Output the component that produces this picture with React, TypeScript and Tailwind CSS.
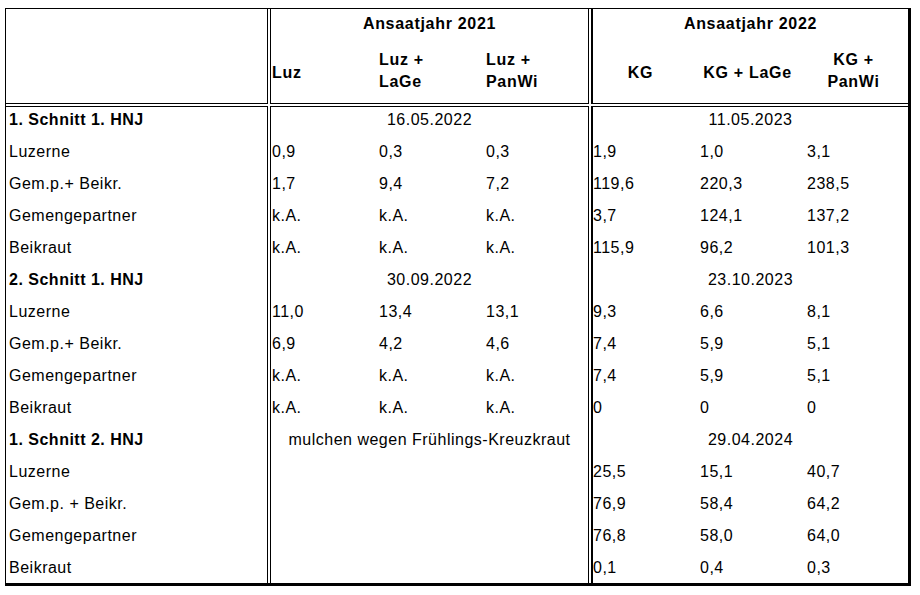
type Cells = string[] | { span: string } | null;

interface Row {
  label: string;
  bold?: boolean;
  y21: Cells;
  y22: Cells;
}

const rows: Row[] = [
  { label: '1. Schnitt 1. HNJ', bold: true, y21: { span: '16.05.2022' }, y22: { span: '11.05.2023' } },
  { label: 'Luzerne', y21: ['0,9', '0,3', '0,3'], y22: ['1,9', '1,0', '3,1'] },
  { label: 'Gem.p.+ Beikr.', y21: ['1,7', '9,4', '7,2'], y22: ['119,6', '220,3', '238,5'] },
  { label: 'Gemengepartner', y21: ['k.A.', 'k.A.', 'k.A.'], y22: ['3,7', '124,1', '137,2'] },
  { label: 'Beikraut', y21: ['k.A.', 'k.A.', 'k.A.'], y22: ['115,9', '96,2', '101,3'] },
  { label: '2. Schnitt 1. HNJ', bold: true, y21: { span: '30.09.2022' }, y22: { span: '23.10.2023' } },
  { label: 'Luzerne', y21: ['11,0', '13,4', '13,1'], y22: ['9,3', '6,6', '8,1'] },
  { label: 'Gem.p.+ Beikr.', y21: ['6,9', '4,2', '4,6'], y22: ['7,4', '5,9', '5,1'] },
  { label: 'Gemengepartner', y21: ['k.A.', 'k.A.', 'k.A.'], y22: ['7,4', '5,9', '5,1'] },
  { label: 'Beikraut', y21: ['k.A.', 'k.A.', 'k.A.'], y22: ['0', '0', '0'] },
  { label: '1. Schnitt 2. HNJ', bold: true, y21: { span: 'mulchen wegen Frühlings-Kreuzkraut' }, y22: { span: '29.04.2024' } },
  { label: 'Luzerne', y21: null, y22: ['25,5', '15,1', '40,7'] },
  { label: 'Gem.p. + Beikr.', y21: null, y22: ['76,9', '58,4', '64,2'] },
  { label: 'Gemengepartner', y21: null, y22: ['76,8', '58,0', '64,0'] },
  { label: 'Beikraut', y21: null, y22: ['0,1', '0,4', '0,3'] },
];

const w21 = ['w-[107px]', 'w-[107px]', 'w-[103px]'];
const w22 = ['w-[107px]', 'w-[107px]', 'w-[101px]'];

function rowHeight(i: number) {
  return i === rows.length - 1 ? 'h-[28px]' : 'h-[32px]';
}

function GroupCells({ cells, widths, pad }: { cells: Cells; widths: string[]; pad: string }) {
  if (cells === null) return null;
  if (!Array.isArray(cells)) {
    return <div className="w-full pt-[4px] text-center leading-[18px]">{cells.span}</div>;
  }
  return (
    <>
      {cells.map((c, j) => (
        <div key={j} className={`${widths[j]} ${pad} pt-[4px] leading-[18px]`}>
          {c}
        </div>
      ))}
    </>
  );
}

export default function App() {
  return (
    <div className="min-h-[595px] w-[920px] bg-white pl-[5px] pt-[8px] font-['Liberation_Sans',Arial,sans-serif] text-[16px] tracking-[0.5px] text-black">
      <div className="w-fit border-l border-t border-r-[3px] border-b-[3px] border-black">
        {/* header */}
        <div className="flex h-[95px]">
          <div className="w-[261px] border-b border-black" />
          <div className="w-[4px] border-x border-black" />
          <div className="flex w-[317px] flex-col border-b border-black font-bold tracking-[0.7px]">
            <div className="pt-[6px] text-center leading-[18px]">Ansaatjahr 2021</div>
            <div className="flex flex-1 items-center pt-[6px] leading-[22px]">
              <div className="w-[107px] pl-[1px] pt-[4px]">Luz</div>
              <div className="w-[107px] pl-[1px]">
                Luz +<br />
                LaGe
              </div>
              <div className="w-[103px] pl-[1px]">
                Luz +<br />
                PanWi
              </div>
            </div>
          </div>
          <div className="w-[5px] border-l border-r-2 border-black" />
          <div className="flex w-[315px] flex-col border-b border-black font-bold tracking-[0.7px]">
            <div className="pt-[6px] text-center leading-[18px]">Ansaatjahr 2022</div>
            <div className="flex flex-1 items-center pt-[6px] text-center leading-[22px]">
              <div className="w-[107px] pr-[12px] pt-[4px]">KG</div>
              <div className="w-[107px] pr-[12px] pt-[4px]">KG + LaGe</div>
              <div className="w-[101px] pr-[8px]">
                KG +<br />
                PanWi
              </div>
            </div>
          </div>
        </div>

        <div className="h-[2px]" />

        {/* body */}
        <div className="flex">
          <div className="w-[261px] border-t border-black">
            {rows.map((r, i) => (
              <div
                key={i}
                className={`${rowHeight(i)} pl-[3px] pt-[4px] leading-[18px] ${r.bold ? 'font-bold' : ''}`}
              >
                {r.label}
              </div>
            ))}
          </div>
          <div className="w-[4px] border-x border-black" />
          <div className="w-[317px] border-t border-black">
            {rows.map((r, i) => (
              <div key={i} className={`flex ${rowHeight(i)}`}>
                <GroupCells cells={r.y21} widths={w21} pad="pl-[1px]" />
              </div>
            ))}
          </div>
          <div className="w-[5px] border-l border-r-2 border-black" />
          <div className="w-[315px] border-t border-black">
            {rows.map((r, i) => (
              <div key={i} className={`flex ${rowHeight(i)}`}>
                <GroupCells cells={r.y22} widths={w22} pad="pl-0" />
              </div>
            ))}
          </div>
        </div>
      </div>
    </div>
  );
}
